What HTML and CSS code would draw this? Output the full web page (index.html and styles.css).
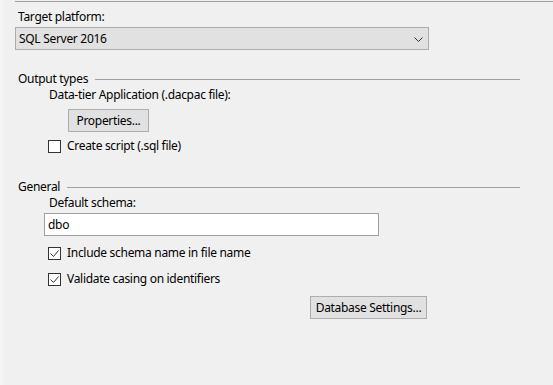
FILE: index.html
```html
<!DOCTYPE html>
<html lang="en">
<head>
    <meta charset="UTF-8">
    <title>Project Settings</title>
    <link rel="stylesheet" href="styles.css">
</head>
<body>
    <div class="edge"></div>
    <div class="page">
        <div class="top-rule"></div>

        <div class="label">Target platform:</div>
        <div class="select">
            <span>SQL Server 2016</span>
            <svg class="chevron" width="9" height="5" viewBox="0 0 9 5">
                <path d="M0.5 0.5 L4.5 4.5 L8.5 0.5" fill="none" stroke="#333" stroke-width="1"/>
            </svg>
        </div>

        <div class="group-head output-head">
            <span>Output types</span>
            <div class="rule"></div>
        </div>
        <div class="indent">
            <div class="label">Data-tier Application (.dacpac file):</div>
            <button class="btn props">Properties...</button>
        </div>
        <label class="check first">
            <span class="box"></span>
            <span>Create script (.sql file)</span>
        </label>

        <div class="group-head general-head">
            <span>General</span>
            <div class="rule"></div>
        </div>
        <div class="indent">
            <div class="label">Default schema:</div>
        </div>
        <div class="input">dbo</div>
        <label class="check include">
            <span class="box"><svg width="11" height="11" viewBox="0 0 11 11"><path d="M1.5 5.5 L4.5 8.5 L9.5 2.5" fill="none" stroke="#333" stroke-width="1"/></svg></span>
            <span>Include schema name in file name</span>
        </label>
        <label class="check validate">
            <span class="box"><svg width="11" height="11" viewBox="0 0 11 11"><path d="M1.5 5.5 L4.5 8.5 L9.5 2.5" fill="none" stroke="#333" stroke-width="1"/></svg></span>
            <span>Validate casing on identifiers</span>
        </label>
        <div class="actions">
            <button class="btn db">Database Settings...</button>
        </div>
    </div>
</body>
</html>
```

FILE: styles.css
```css
body {
    margin: 0;
    background: #f0f0f0;
    font-family: "Noto Sans", "Open Sans", sans-serif;
    font-size: 12px;
    letter-spacing: -0.3px;
    color: #000;
    height: 385px;
    overflow: hidden;
    display: flex;
}
.edge {
    width: 3px;
    background: #f4f4f4;
}
.page {
    flex: 1;
    padding-left: 12px;
}
.top-rule {
    margin-top: 1px;
    border-top: 1px solid #a0a0a0;
}
.label {
    line-height: 16px;
    padding-left: 3px;
    margin-top: 7px;
    height: 16px;
}
.select {
    margin-top: 2px;
    height: 21px;
    border: 1px solid #adadad;
    background: #e1e1e1;
    display: flex;
    align-items: center;
    justify-content: space-between;
    padding: 0 5px 0 3px;
    width: 404px;
}
.chevron {
    margin-top: 1px;
}
.group-head {
    display: flex;
    align-items: center;
    gap: 7px;
    padding-left: 3px;
    line-height: 16px;
    height: 16px;
    width: 502px;
}
.group-head .rule {
    flex: 1;
    border-top: 1px solid #a0a0a0;
    margin-top: 1px;
}
.output-head {
    margin-top: 21px;
}
.general-head {
    margin-top: 25px;
}
.indent {
    padding-left: 31px;
}
.indent .label {
    margin-top: 0;
}
.btn {
    display: block;
    font-family: inherit;
    font-size: 12px;
    letter-spacing: -0.3px;
    color: #000;
    background: #e1e1e1;
    border: 1px solid #adadad;
    padding: 0;
    height: 23px;
    line-height: 20px;
}
.props {
    margin-left: 22px;
    margin-top: 6px;
    width: 81px;
}
.check {
    display: flex;
    align-items: center;
    gap: 6px;
    margin-left: 33px;
    height: 16px;
    line-height: 16px;
}
.check.first {
    margin-top: 6px;
}
.box {
    width: 11px;
    height: 11px;
    border: 1px solid #333;
    background: #fff;
    display: flex;
}
.input {
    margin-top: 2px;
    margin-left: 29px;
    width: 330px;
    height: 21px;
    border: 1px solid #a0a0a0;
    background: #fff;
    line-height: 21px;
    padding-left: 3px;
}
.check.include {
    margin-top: 9px;
}
.check.validate {
    margin-top: 10px;
}
.actions {
    margin-top: 9px;
    padding-left: 295px;
}
.db {
    width: 117px;
}
```
